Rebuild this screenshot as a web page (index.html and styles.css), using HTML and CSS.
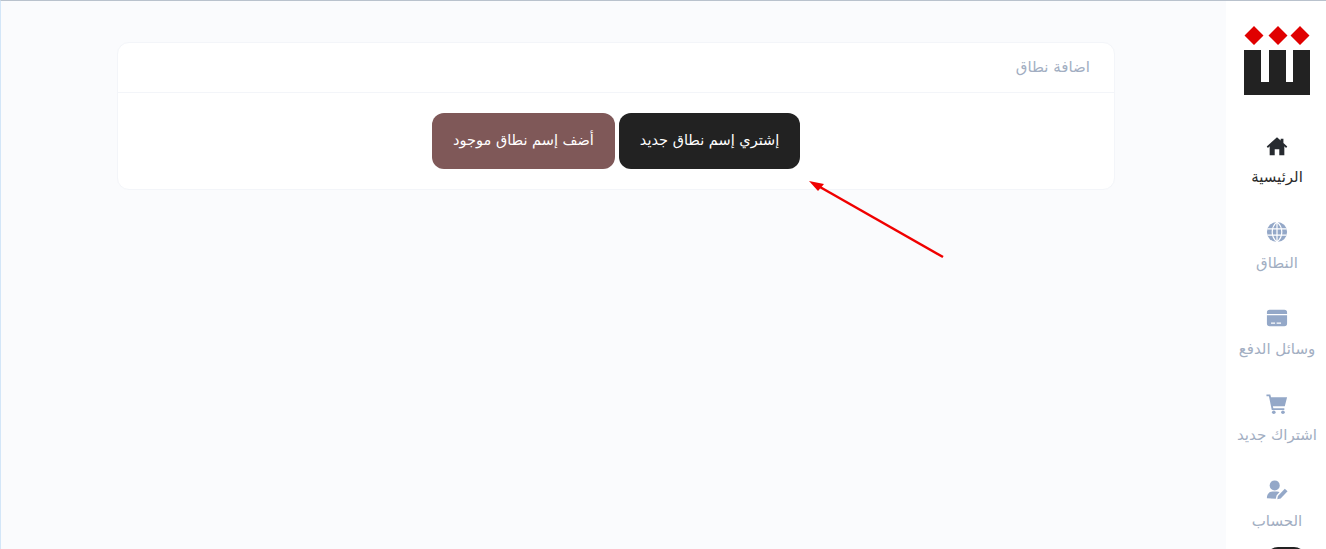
FILE: index.html
```html
<!DOCTYPE html>
<html lang="ar" dir="rtl">
<head>
    <meta charset="UTF-8">
    <title>اضافة نطاق</title>
    <link rel="stylesheet" href="styles.css">
</head>
<body>
    <div class="layout">
        <!-- sidebar -->
        <nav class="sidebar">
            <svg class="logo" viewBox="0 0 66 69" width="66" height="69">
                <path fill="#e00000" d="M10 0l9.500 9.500L10 19 .5 9.500zM34 0l9.500 9.500L34 19l-9.500-9.500zM56 0l9.500 9.500L56 19l-9.500-9.500z"/>
                <path fill="#222" d="M0 24h17v32h8V24h17v32h7V24h17v45H0z"/>
            </svg>
            <a class="nav-item active" href="#">
                <svg class="nav-icon" viewBox="0 0 24 24"><path d="M12 2.500L.8 12.600l1.300 1.500L4 12.400V22h5.500v-6.500h5V22H20v-9.600l1.900 1.700 1.300-1.500L19 8.800V4h-3v2.100z"/></svg>
                <span>الرئيسية</span>
            </a>
            <a class="nav-item" href="#">
                <svg class="nav-icon" viewBox="0 0 24 24">
                    <circle cx="12" cy="12" r="11"/>
                    <path class="globe-lines" d="M1.500 8.500h21M1.500 15.500h21M12 1v22M12 1c-7 6-7 16 0 22M12 1c7 6 7 16 0 22"/>
                </svg>
                <span>النطاق</span>
            </a>
            <a class="nav-item" href="#">
                <svg class="nav-icon" viewBox="0 0 24 24"><path fill-rule="evenodd" d="M4 3h16a3 3 0 0 1 3 3v1.500H1V6a3 3 0 0 1 3-3zM1 9h22v9a3 3 0 0 1-3 3H4a3 3 0 0 1-3-3zm4.500 8v1.300h4.400V17zm6.100 0v1.300h4.800V17z"/></svg>
                <span>وسائل الدفع</span>
            </a>
            <a class="nav-item" href="#">
                <svg class="nav-icon" viewBox="0 0 24 24"><path d="M.5 1.500h4.200l.8 3H23l-2.500 10H7.500l.5 2h12v2H6.300L3.200 3.500H.5z"/><circle cx="8.500" cy="21" r="2"/><circle cx="18.500" cy="21" r="2"/></svg>
                <span>اشتراك جديد</span>
            </a>
            <a class="nav-item" href="#">
                <svg class="nav-icon" viewBox="0 0 24 24"><circle cx="9.500" cy="7" r="5.500"/><path d="M1 21c0-5 3-7.500 6-7.500h5c1 0 2 .3 2.800.8L11.500 18l-.8 3.500z"/><path d="M13 18.500l7.500-8 3 2.800-7.500 8-3.700.9z"/></svg>
                <span>الحساب</span>
            </a>
            <div class="pill"></div>
        </nav>

        <!-- content -->
        <main class="content">
            <section class="card">
                <header class="card-head">اضافة نطاق</header>
                <div class="card-body">
                    <a class="btn btn-dark" href="#">إشتري إسم نطاق جديد</a>
                    <a class="btn btn-brown" href="#">أضف إسم نطاق موجود</a>
                </div>
            </section>
        </main>
    </div>

    <!-- annotation arrow -->
    <svg class="arrow" viewBox="0 0 140 80" width="140" height="80">
        <path d="M135 78L12 8" stroke="#f00000" stroke-width="2.500" fill="none"/>
        <path d="M1 2l15 3-6 7z" fill="#f00000"/>
    </svg>
</body>
</html>
```

FILE: styles.css
```css
* {
    box-sizing: border-box;
}
html, body {
    height: 100%;
    margin: 0;
    overflow: hidden;
}
body {
    font-family: "DejaVu Sans", "Noto Sans", sans-serif;
    background: #fafbfd;
    border-top: 1px solid #b9c2cd;
    border-left: 1px solid #d3e6f8;
    position: relative;
}
a {
    text-decoration: none;
}
.layout {
    display: flex;
    height: 548px;
}
.sidebar {
    width: 100px;
    flex: none;
    background: #fff;
    display: flex;
    flex-direction: column;
    align-items: center;
    padding-top: 25px;
    overflow: hidden;
}
.logo {
    display: block;
    flex: none;
    margin: 0 0 40px 2px;
}
.nav-item {
    display: flex;
    flex-direction: column;
    align-items: center;
    flex: none;
    height: 86px;
    width: 100%;
    padding-left: 2px;
    color: #a2aec2;
    font-size: 15px;
    white-space: nowrap;
}
.nav-item.active {
    color: #2a2a2a;
}
.nav-icon {
    width: 22px;
    height: 22px;
    fill: #94a8c8;
    margin-bottom: 11px;
}
.active .nav-icon {
    fill: #272b30;
}
.globe-lines {
    fill: none;
    stroke: #fff;
    stroke-width: 1.300;
}
.pill {
    width: 40px;
    height: 24px;
    border-radius: 12px;
    background: #222;
    flex: none;
    margin: -18px 0 0 20px;
}
.content {
    flex: 1;
    padding: 41px 111px 0 116px;
}
.card {
    background: #fff;
    border: 1px solid #f3f5f9;
    border-radius: 12px;
    height: 148px;
}
.card-head {
    height: 50px;
    padding: 0 24px 2px;
    border-bottom: 1px solid #f3f5f9;
    display: flex;
    align-items: center;
    color: #a2aec2;
    font-size: 15px;
}
.card-body {
    display: flex;
    justify-content: center;
    gap: 4px;
    padding-top: 20px;
}
.btn {
    display: flex;
    align-items: center;
    justify-content: center;
    height: 56px;
    padding-bottom: 2px;
    border-radius: 12px;
    color: #fff;
    font-size: 14.500px;
}
.btn-dark {
    width: 181px;
    background: #222;
}
.btn-brown {
    width: 183px;
    background: #7f5858;
}
.arrow {
    position: absolute;
    left: 807px;
    top: 178px;
}
```
